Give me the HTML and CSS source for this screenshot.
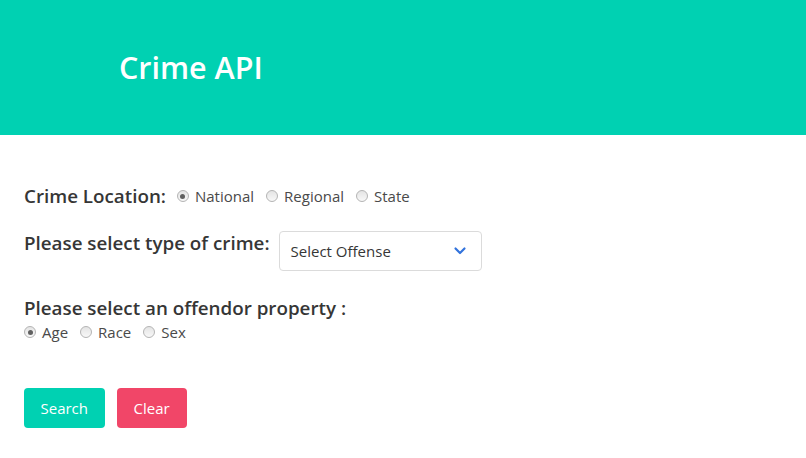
FILE: index.html
```html
<!DOCTYPE html>
<html>
<head>
<meta charset="utf-8">
<link rel="stylesheet" href="styles.css">
</head>
<body>
<header class="hero">
  <h1 class="title">Crime API</h1>
</header>
<main class="content">
  <div class="row location">
    <span class="label">Crime Location:</span>
    <label class="radio"><span class="dot checked"></span>National</label>
    <label class="radio"><span class="dot"></span>Regional</label>
    <label class="radio"><span class="dot"></span>State</label>
  </div>
  <div class="row crime">
    <span class="label">Please select type of crime:</span>
    <div class="select">
      <span>Select Offense</span>
      <svg class="chev" width="14" height="10" viewBox="0 0 14 10"><path d="M2.5 2.5 L7 7 L11.5 2.5" fill="none" stroke="#3273dc" stroke-width="2.2" stroke-linecap="round" stroke-linejoin="round"/></svg>
    </div>
  </div>
  <div class="offender">
    <div class="label">Please select an offendor property :</div>
    <div class="row radios">
      <label class="radio"><span class="dot checked"></span>Age</label>
      <label class="radio"><span class="dot"></span>Race</label>
      <label class="radio"><span class="dot"></span>Sex</label>
    </div>
  </div>
  <div class="buttons">
    <button class="btn primary">Search</button>
    <button class="btn danger">Clear</button>
  </div>
</main>
</body>
</html>
```
FILE: styles.css
```css
* { box-sizing: border-box; }
body {
  margin: 0;
  font-family: "Open Sans", "Noto Sans", sans-serif;
  color: #4a4a4a;
  background: #fff;
}
.hero {
  background: #00d1b2;
  height: 135px;
  display: flex;
  align-items: center;
  padding-left: 119px;
}
.title {
  margin: 0;
  color: #fff;
  font-size: 30.5px;
  font-weight: 600;
  padding-bottom: 2px;
}
.content {
  padding: 48px 24px 0;
}
.row {
  display: flex;
  align-items: center;
}
.label {
  font-size: 18.8px;
  font-weight: 600;
  color: #363636;
}
.location .label { margin-right: 11px; }
.radio {
  display: flex;
  align-items: center;
  font-size: 15px;
  color: #4a4a4a;
  margin-right: 12px;
}
.dot {
  width: 12px;
  height: 12px;
  border-radius: 50%;
  border: 1px solid #b4b4b4;
  background: linear-gradient(#e4e4e4, #f8f8f8);
  margin-right: 6px;
  position: relative;
}
.dot.checked::after {
  content: "";
  position: absolute;
  left: 2.5px;
  top: 2.5px;
  width: 5px;
  height: 5px;
  border-radius: 50%;
  background: #606060;
}
.crime {
  margin-top: 20px;
  align-items: flex-start;
}
.crime .label { margin-right: 9px; margin-top: 1px; }
.select {
  width: 203px;
  height: 40px;
  border: 1px solid #dbdbdb;
  border-radius: 4px;
  display: flex;
  align-items: center;
  justify-content: space-between;
  padding: 0 14px 0 11px;
  font-size: 15px;
  color: #363636;
  margin-top: 2px;
}
.chev { display: block; }
.offender {
  margin-top: 24px;
}
.offender .label { line-height: 27px; }
.radios { margin-top: 0; }
.buttons {
  display: flex;
  gap: 12px;
  margin-top: 46px;
}
.btn {
  font-family: inherit;
  font-size: 15px;
  color: #fff;
  border: none;
  border-radius: 4px;
  height: 40px;
  padding: 0 16.5px;
}
.primary { background: #00d1b2; }
.danger { background: #f14668; padding: 0 17px; }
```
